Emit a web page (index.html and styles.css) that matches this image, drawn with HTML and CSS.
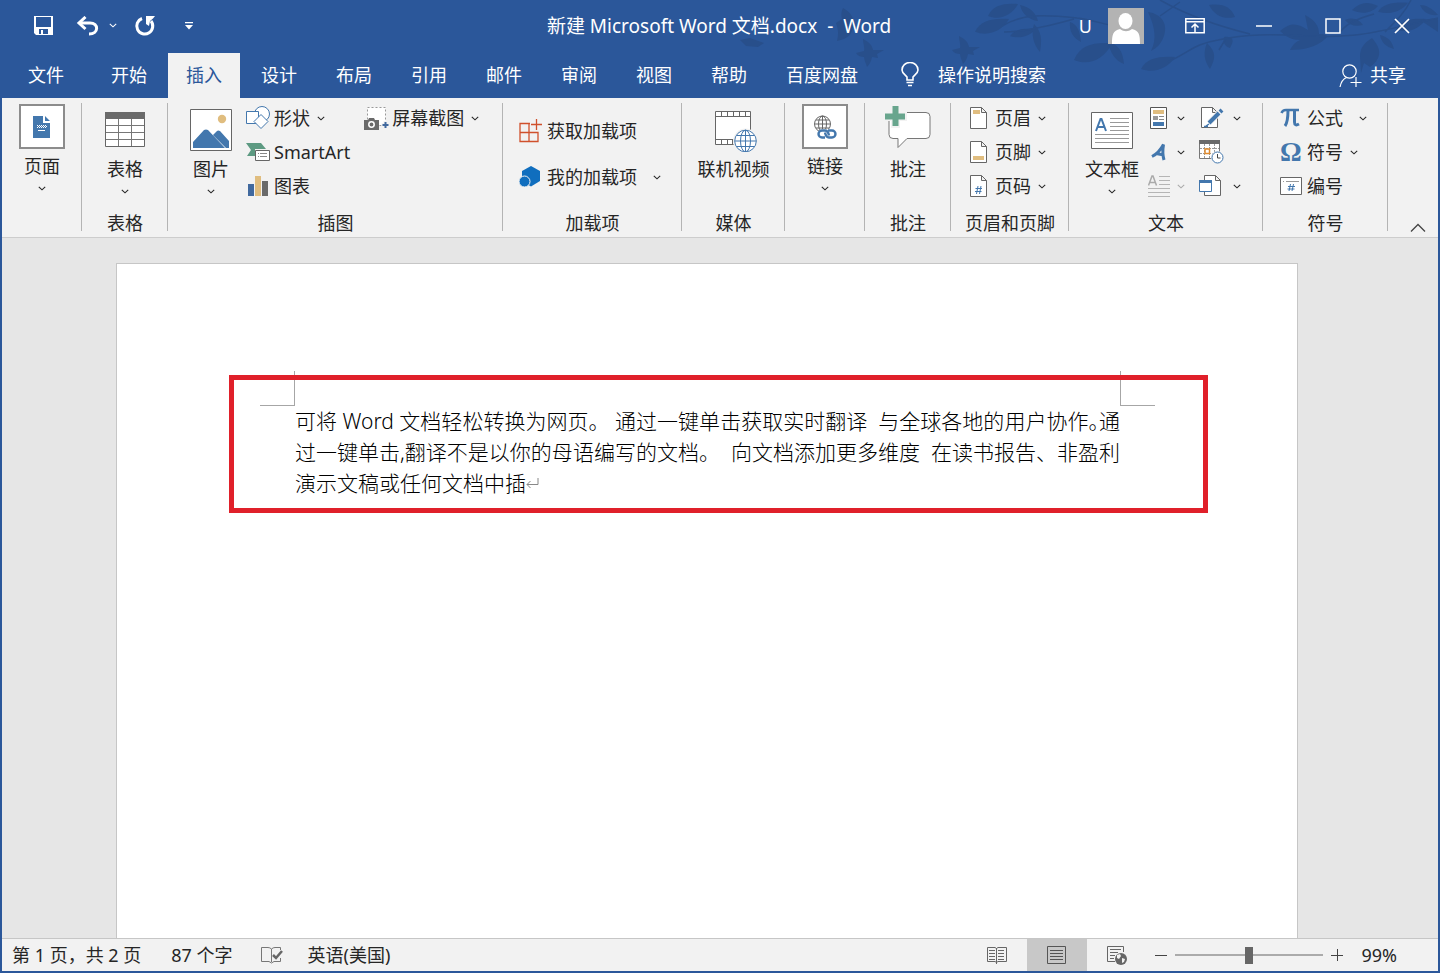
FILE: index.html
```html
<!DOCTYPE html>
<html lang="zh-CN">
<head>
<meta charset="utf-8">
<title>新建 Microsoft Word 文档.docx - Word</title>
<link rel="stylesheet" href="styles.css">
</head>
<body>
<svg class="defs" aria-hidden="true">
  <symbol id="chev" viewBox="0 0 8 5"><path d="M.8.8 4 3.8 7.2.8" fill="none" stroke="currentColor" stroke-width="1.1"/></symbol>
  <symbol id="leaf" viewBox="0 0 30 16" preserveAspectRatio="none"><path d="M0 13C5 2 16 0 30 1 24 12 12 18 0 13Z"/></symbol>
  <symbol id="bird" viewBox="0 0 30 28"><path d="M7 0c6 3 9 6 10 11l11 0-7 4 1 4-6-1c-1 5-3 8-5 10-1-4-3-7-3-10-3 0-6-1-8-4l8-2C9 8 7 5 7 0Z"/></symbol>
</svg>

<header class="top">
  <svg class="decor" width="660" height="98" viewBox="780 0 660 98" aria-hidden="true">
    <g fill="#284f8b">
      <path d="M843 8c9 5 12 12 10 19-1 7-5 12-16 14 2-8 1-12-1-18l6-4c-1-4-1-7 1-11Z"/>
      <use href="#bird" x="856" y="38" width="30" height="30"/>
      <path d="m740 40 10-2 14 5-6 4-12-1z"/>
      <use href="#bird" x="952" y="36" width="30" height="28"/>
      <use href="#leaf" x="975" y="18" width="34" height="17"/>
      <use href="#leaf" x="988" y="3" width="30" height="16"/>
      <use href="#leaf" x="1010" y="28" width="26" height="10"/>
      <path d="M1034 24c8 8 8 16 6 28-7-8-9-18-6-28ZM1020 5c10 2 16 8 18 16-9-1-16-7-18-16ZM1070 22c7 2 10 9 11 20-8-4-12-11-11-20Z"/>
      <use href="#leaf" x="1074" y="42" width="38" height="22"/>
      <path d="M1108 42c10 2 15 9 16 22-9-3-14-12-16-22ZM1148 12c14 2 20 12 16 24-3 8-7 12-13 15 6-12 4-24-3-39Z"/>
      <use href="#leaf" x="1141" y="56" width="34" height="16"/>
      <path d="M1207 43c9 9 9 15 3 26-6-8-7-17-3-26ZM1224 37c9-1 11 3 6 11-6-2-7-6-6-11ZM1209 5c14-2 22 2 26 12-12 3-21-2-26-12Z"/>
      <path d="M1280 31c12-10 18-7 28-1l-3-15c10 5 14 11 14 19 8 0 10 2 6 5-8 8-22 11-35 11 3-6 6-8 10-10-8 0-14-3-20-9Z"/>
      <path d="M1372 38c8 9 12 19-2 29l-6-4-3 10-1-17c0-8 4-13 12-18ZM1380 35c8 2 12 6 14 14-8-2-13-7-14-14ZM1352 10c8-8 16-9 26-4-6 7-16 9-26 4ZM1420 5c6 0 12 3 18 10-9 1-15-3-18-10ZM1345 20c8-3 14-1 18 5-8 2-14 0-18-5Z"/>
      <use href="#leaf" x="1396" y="18" width="30" height="14"/>
      <use href="#leaf" x="1378" y="2" width="30" height="12"/>
      <path d="M1420 20l18-2v14z"/>
    </g>
    <g fill="none" stroke="#284f8b" stroke-width="1.500">
      <path d="M1002 26c20-12 40-12 75-8 22 2 40 14 62 6M1004 32c20 0 45-6 70-13M1168 62c22-10 26-18 50-22 30-6 50-6 90-4 50 2 60-2 130-18M1160 0c25 14 50 24 90 34M1385 32c14-14 20-20 26-32M1340 32c8-10 20-14 34-18M1180 2l-20 14M1225 40l-6 10"/>
    </g>
  </svg>

  <div class="titlebar">
    <div class="qat">
      <button class="ib save" aria-label="保存"><svg width="20" height="20" viewBox="0 0 20 20"><path fill="#fff" fill-rule="evenodd" d="M0 0h19v19H2l-2-2Zm2 1v10h15V1Zm3 12v5h2v-4h2v4h5v-5Z"/></svg></button>
      <button class="ib undo" aria-label="撤销"><svg width="24" height="20" viewBox="0 0 24 20"><path fill="none" stroke="#fff" stroke-width="3" d="M3 7h11c9 0 9 11-1 11"/><path fill="none" stroke="#fff" stroke-width="3" d="M9.500 1 3 7l6.500 6"/></svg></button>
      <button class="ib more" aria-label="撤销选项"><svg width="8" height="5"><use href="#chev"/></svg></button>
      <button class="ib redo" aria-label="重复"><svg width="22" height="22" viewBox="0 0 22 22"><path fill="none" stroke="#fff" stroke-width="3" d="M8 3.500A8 8 0 1 0 17 6"/><path fill="#fff" d="M12 1h9l-2 2.500-3 2.500-1 5-3-2Z"/></svg></button>
      <button class="ib custom" aria-label="自定义快速访问工具栏"><svg width="8" height="8" viewBox="0 0 8 8"><path fill="#fff" d="M0 0h8v1.300H0ZM0 3h8L4 7.500Z"/></svg></button>
    </div>
    <h1 class="title">新建 Microsoft Word 文档.docx&nbsp; -&nbsp; Word</h1>
    <div class="win">
      <span class="user">U</span>
      <button class="avatar" aria-label="帐户"><svg width="36" height="36" viewBox="0 0 36 36"><path fill="#b3b3b3" d="M0 0h36v36H0z"/><ellipse cx="17.500" cy="13" rx="7" ry="8" fill="#fff"/><path fill="#fff" d="M4 36c0-10 1-13 8-15 4 3 8 3 12 0 7 2 8 5 8 15Z"/></svg></button>
      <button class="wb" aria-label="功能区显示选项"><svg width="20" height="16" viewBox="0 0 20 16"><path fill="none" stroke="#fff" stroke-width="1.500" d="M.8.800h18.400v14H.800ZM1 3.800h18M10 14V6M6.500 9.500 10 6l3.500 3.500"/></svg></button>
      <button class="wb" aria-label="最小化"><svg width="16" height="16"><path stroke="#fff" stroke-width="1.500" d="M0 8h16"/></svg></button>
      <button class="wb" aria-label="最大化"><svg width="16" height="16"><path fill="none" stroke="#fff" stroke-width="1.500" d="M1 1h14v14H1Z"/></svg></button>
      <button class="wb" aria-label="关闭"><svg width="16" height="16"><path stroke="#fff" stroke-width="1.700" d="m1 1 14 14M15 1 1 15"/></svg></button>
    </div>
  </div>

  <nav class="tabs">
    <button class="tab file">文件</button>
    <button class="tab">开始</button>
    <button class="tab active">插入</button>
    <button class="tab">设计</button>
    <button class="tab">布局</button>
    <button class="tab">引用</button>
    <button class="tab">邮件</button>
    <button class="tab">审阅</button>
    <button class="tab">视图</button>
    <button class="tab">帮助</button>
    <button class="tab">百度网盘</button>
    <button class="tell"><svg width="18" height="25" viewBox="0 0 18 25"><path fill="none" stroke="#fff" stroke-width="1.600" d="M6 18v-3C4 12.500 1 11 1 8a8 7.500 0 0 1 16 0c0 3-3 4.500-5 7v3ZM5.500 20.500h7M7 23.500h4"/></svg>操作说明搜索</button>
    <button class="share"><svg width="23" height="25" viewBox="0 0 23 25"><circle cx="10.500" cy="9.500" r="6.700" fill="none" stroke="#fff" stroke-width="1.200"/><path fill="none" stroke="#fff" stroke-width="1.200" d="M1 25c1-5 3-8 6.500-9.500M17 15v10M11.500 20.500h11"/></svg>共享</button>
  </nav>
</header>

<section class="ribbon" aria-label="插入">
  <div class="group g-page">
    <div class="items center">
      <button class="big"><span class="frame"><svg width="18" height="24" viewBox="0 0 18 24"><path fill="#4377ad" d="M0 1h10v7h7v15H0ZM12 1l5 5h-5Z"/><path stroke="#fff" stroke-dasharray="1 1" d="M4 10.500h9M5 11.500h9M4 12.500h9"/><path stroke="#fff" d="M5 15.500h7"/></svg></span><span>页面</span><svg class="chev"><use href="#chev"/></svg></button>
    </div>
  </div>

  <div class="group g-table">
    <div class="items center">
      <button class="big"><span class="pic"><svg width="40" height="36" viewBox="0 0 40 36"><path fill="#fff" stroke="#666" d="M.5.500h39v34H.500Z"/><path fill="#6a6a6a" d="M0 0h40v7H0z"/><path fill="none" stroke="#777" d="M1 13.500h38M1 20.500h38M1 27.500h38M13.500 7v27M26.500 7v27"/></svg></span><span>表格</span><svg class="chev"><use href="#chev"/></svg></button>
    </div>
    <div class="name">表格</div>
  </div>

  <div class="group g-illus">
    <div class="items">
      <button class="big"><span class="pic"><svg width="42" height="42" viewBox="0 0 42 42"><path fill="#fff" stroke="#666" d="M.5.500h41v41H.500Z"/><circle cx="32" cy="10" r="4.200" fill="#e0bd7f"/><path fill="#4377ad" d="M3 39v-6l11-12q2-1 4 0l17 18ZM23 26l4-4q1-1 3 0l9 10v7h-3Z"/></svg></span><span>图片</span><svg class="chev"><use href="#chev"/></svg></button>
      <div class="col">
        <button class="row"><span class="ic"><svg width="24" height="24" viewBox="0 0 24 24"><g fill="#fff" stroke="#4377ad"><circle cx="16" cy="8" r="7.500"/><path d="M.5 5.500h12v12H.500Z"/><path d="m15 8.500 7 7-7 7-7-7Z"/></g></svg></span>形状<svg class="chev"><use href="#chev"/></svg></button>
        <button class="row"><span class="ic"><svg width="24" height="20" viewBox="0 0 24 20"><path fill="#5d9a82" d="M0 1h15l5 6H9v7H1l4-6Z"/><path fill="#fff" stroke="#666" d="M9.500 8.500h14v10h-14Z"/><path stroke="#888" d="M12 11.500h1m1 0h7M12 14.500h1m1 0h7"/></svg></span>SmartArt</button>
        <button class="row"><span class="ic"><svg width="22" height="22" viewBox="0 0 22 22"><path fill="#41699e" d="M2 9h6v12H2z"/><path fill="#e0bd7f" d="M9 1h6v20H9z"/><path fill="#6a6a6a" d="M16 6h6v15h-6z"/></svg></span>图表</button>
      </div>
      <div class="col">
        <button class="row"><span class="ic"><svg width="25" height="24" viewBox="0 0 25 24"><path fill="#fff" stroke="#999" stroke-dasharray="2 2" d="M3.500 1.500h18v18h-18z"/><path fill="#6a6a6a" d="M0 14h4l1-2h5l1 2h4v10H0z"/><circle cx="7.500" cy="18.500" r="2.700" fill="none" stroke="#fff" stroke-width="1.500"/><path d="M21.500 15v8M17.500 19h8" stroke="#f2f2f2" stroke-width="4"/><path d="M21.500 16v6M18.500 19h6" stroke="#41699e" stroke-width="2"/></svg></span>屏幕截图<svg class="chev"><use href="#chev"/></svg></button>
      </div>
    </div>
    <div class="name">插图</div>
  </div>

  <div class="group g-addin">
    <div class="items">
      <div class="col tall">
        <button class="row"><span class="ic"><svg width="24" height="24" viewBox="0 0 24 24"><path fill="none" stroke="#d0502c" stroke-width="1.300" d="M11 4.500H1v18h18v-9H1M10 4.500v18M17.500 0v11M12 5.500h11"/></svg></span>获取加载项</button>
        <button class="row wide"><span class="ic"><svg width="22" height="22" viewBox="0 0 22 22"><path fill="#106ebe" d="m12 0 9 5v10l-9 5.500-9-5.500V5Z"/><circle cx="5.500" cy="15.500" r="5.500" fill="#106ebe" stroke="#f2f2f2"/></svg></span>我的加载项<svg class="chev"><use href="#chev"/></svg></button>
      </div>
    </div>
    <div class="name">加载项</div>
  </div>

  <div class="group g-media">
    <div class="items center">
      <button class="big"><span class="pic"><svg width="48" height="44" viewBox="-5 0 48 44"><path fill="#fff" stroke="#666" d="M.5 3.500h35v33H.500Z"/><path fill="none" stroke="#666" d="M1 8.500h34M1 31.500h34M6.500 4v4m6-4v4m6-4v4m6-4v4m6-4v4M6.500 32v4m6-4v4m5-4v4"/><circle cx="30.500" cy="33" r="12.500" fill="#f2f2f2"/><g fill="#fff" stroke="#4377ad"><circle cx="30.500" cy="33" r="10.800"/><ellipse cx="30.500" cy="33" rx="5" ry="10.800"/><path d="M30.500 22v22M20 33h21M22 27.500h17M22 38.500h17"/></g></svg></span><span>联机视频</span></button>
    </div>
    <div class="name">媒体</div>
  </div>

  <div class="group g-link">
    <div class="items center">
      <button class="big"><span class="frame"><svg width="24" height="26" viewBox="0 0 24 26"><g fill="none" stroke="#666"><circle cx="9.500" cy="10" r="8"/><ellipse cx="9.500" cy="10" rx="4" ry="8"/><path d="M9.500 2v16M2 10h15M3 6h13M3 14h13"/></g><path stroke="#fff" stroke-width="10" stroke-linecap="round" d="M10 20h9"/><g fill="none" stroke="#4377ad" stroke-width="2.400"><path d="M12 23.500H9a3.500 3.500 0 0 1 0-7h3q3 0 4 5"/><path d="M15 16.500h4a3.500 3.500 0 0 1 0 7h-3q-3 0-4-5"/></g></svg></span><span>链接</span><svg class="chev"><use href="#chev"/></svg></button>
    </div>
  </div>

  <div class="group g-comment">
    <div class="items center">
      <button class="big"><span class="pic"><svg width="46" height="48" viewBox="0 0 46 48"><path fill="#fff" stroke="#777" d="M8 6.500h33q4 0 4 4v18q0 4-4 4H22l-9 9v-9H8q-4 0-4-4v-18q0-4 4-4Z"/><path stroke="#f2f2f2" stroke-width="9" d="M10.500 0v22M0 10.500h22"/><path stroke="#68a58d" stroke-width="6" d="M10.500 0v20M0 10.500h20"/></svg></span><span>批注</span></button>
    </div>
    <div class="name">批注</div>
  </div>

  <div class="group g-hf">
    <div class="items">
      <div class="col">
        <button class="row"><span class="ic"><svg width="17" height="22" viewBox="0 0 17 22"><path fill="#fff" stroke="#666" d="M.5.500h11l5 5v16H.500ZM11.500.500v5h5"/><path fill="#e0bd7f" d="M3 3h7v4H3z"/></svg></span>页眉<svg class="chev"><use href="#chev"/></svg></button>
        <button class="row"><span class="ic"><svg width="17" height="22" viewBox="0 0 17 22"><path fill="#fff" stroke="#666" d="M.5.500h11l5 5v16H.500ZM11.500.500v5h5"/><path fill="#e0bd7f" d="M3 15h11v4H3z"/></svg></span>页脚<svg class="chev"><use href="#chev"/></svg></button>
        <button class="row"><span class="ic"><svg width="17" height="22" viewBox="0 0 17 22"><path fill="#fff" stroke="#666" d="M.5.500h11l5 5v16H.500ZM11.500.500v5h5"/><path fill="none" stroke="#4377ad" d="M8 11 6.500 19M11 11l-1.500 8M5.500 13.500H12M5 16.500h6.500"/></svg></span>页码<svg class="chev"><use href="#chev"/></svg></button>
      </div>
    </div>
    <div class="name">页眉和页脚</div>
  </div>

  <div class="group g-text">
    <div class="items">
      <button class="big"><span class="pic"><svg width="42" height="37" viewBox="0 0 42 37"><path fill="#fff" stroke="#666" d="M.5.500h41v36H.500Z"/><path fill="none" stroke="#4377ad" stroke-width="2" d="m5 19 4.500-12h1L15 19M6.500 15h7"/><path stroke="#999" d="M19 6.500h19M19 10.500h19M19 14.500h19M19 18.500h19M4 22.500h34M4 26.500h34M4 30.500h34"/></svg></span><span>文本框</span><svg class="chev"><use href="#chev"/></svg></button>
      <div class="col">
        <button class="row" aria-label="文档部件"><span class="ic"><svg width="22" height="22" viewBox="0 0 22 22"><path fill="#fff" stroke="#555" d="M2.500.500h16v21h-16z"/><path fill="#e0bd7f" d="M5 3h11v4H5z"/><path fill="#999" d="M5 9h5v4H5z"/><path stroke="#888" d="M11 9.500h5M11 12.500h5"/><path fill="#4377ad" d="M5 15h11v4H5z"/></svg></span><svg class="chev"><use href="#chev"/></svg></button>
        <button class="row" aria-label="艺术字"><span class="ic"><svg width="22" height="22" viewBox="0 0 22 22"><path fill="none" stroke="#4377ad" stroke-width="3" d="M4 15.500Q11 12 15.500 3.500 14 12 16 19M8 12.500l8 1.500"/></svg></span><svg class="chev"><use href="#chev"/></svg></button>
        <button class="row" aria-label="首字下沉" disabled><span class="ic"><svg width="22" height="22" viewBox="0 0 22 22"><path fill="none" stroke="#aaa" stroke-width="1.500" d="M.5 10.500 4 1h1l3.500 9.500M2 7.500h5"/><path stroke="#b5b5b5" d="M11 1.500h11M11 5.500h11M11 9.500h11M0 13.500h22M0 17.500h22M0 21.500h22"/></svg></span><svg class="chev"><use href="#chev"/></svg></button>
      </div>
      <div class="col">
        <button class="row" aria-label="签名行"><span class="ic"><svg width="25" height="24" viewBox="0 0 25 24"><path fill="#fff" stroke="#666" d="M2.500 1.500h11l5 5v15h-16zM13.500 1.500v5h5"/><path stroke="#f2f2f2" stroke-width="6" d="M10 17 22 5"/><path stroke="#4377ad" stroke-width="4" d="M10 17 20 7M21 6l2-2"/><path stroke="#4377ad" stroke-width="1.500" d="m7 20 3-2M5 20.500h4"/></svg></span><svg class="chev"><use href="#chev"/></svg></button>
        <button class="row" aria-label="日期和时间"><span class="ic"><svg width="25" height="24" viewBox="0 0 25 24"><path fill="#fff" stroke="#777" d="M.5.500h20v18H.500z"/><path fill="#6a6a6a" d="M0 0h21v4H0z"/><path stroke="#999" stroke-dasharray="2 1" d="M1 8.500h19M1 13.500h19M5.500 4v14M10.500 4v14M15.500 4v14"/><path fill="#fff" stroke="#e08a2c" stroke-width="1.500" d="M6 9h4.500v4.500H6z"/><circle cx="18.500" cy="17.500" r="6.500" fill="#f2f2f2"/><circle cx="18.500" cy="17.500" r="5.500" fill="#fff" stroke="#4377ad"/><path fill="none" stroke="#444" d="M18.500 14v4h3"/></svg></span></button>
        <button class="row" aria-label="对象"><span class="ic"><svg width="25" height="24" viewBox="0 0 25 24"><path fill="#fff" stroke="#666" d="M5.500 6V1.500h11l5 5v15h-16V18M16.500 1.500v5h5"/><path fill="#fff" stroke="#4377ad" d="M.5 6.500h12v11H.500z"/><path fill="#4377ad" d="M0 6h13v3H0z"/></svg></span><svg class="chev"><use href="#chev"/></svg></button>
      </div>
    </div>
    <div class="name">文本</div>
  </div>

  <div class="group g-sym">
    <div class="items">
      <div class="col">
        <button class="row wide"><span class="ic"><svg width="22" height="20" viewBox="0 0 22 20"><path fill="none" stroke="#4377ad" stroke-width="2.500" d="M1.500 5Q2.500 2 6 2h13"/><path fill="none" stroke="#4377ad" stroke-width="3" d="M8 2q0 12-3 16M14.500 2v12q0 4.500 4.500 2"/></svg></span>公式<svg class="chev"><use href="#chev"/></svg></button>
        <button class="row"><span class="ic glyph">Ω</span>符号<svg class="chev"><use href="#chev"/></svg></button>
        <button class="row"><span class="ic"><svg width="22" height="18" viewBox="0 0 22 18"><path fill="#fff" stroke="#666" d="M.5.500h21v17H.500Z"/><path stroke="#999" d="M3 4.500h1m2 0h13"/><path fill="none" stroke="#4377ad" d="M10.500 7 9 14M13.500 7 12 14M8 9.500h7M7.500 12h7"/></svg></span>编号</button>
      </div>
    </div>
    <div class="name">符号</div>
  </div>
  <button class="collapse" aria-label="折叠功能区"><svg width="16" height="9"><path fill="none" stroke="#444" stroke-width="1.300" d="m1 8.500 7-7 7 7"/></svg></button>
</section>

<main class="canvas">
  <article class="page">
    <div class="body">
      <i class="mark left"></i><i class="mark right"></i>
      <p class="line">可将 Word 文档轻松转换为网页。 通过一键单击获取实时翻译&nbsp; 与全球各地的用户协作<span class="half">。</span>通</p>
      <p class="line">过一键单击,翻译不是以你的母语编写的文档。&nbsp; 向文档添加更多维度&nbsp; 在读书报告、非盈利</p>
      <p class="line last">演示文稿或任何文档中插<svg width="13" height="12" viewBox="0 0 13 12"><path fill="none" stroke="#888" d="M12 0v6.500H1M4.500 3 1 6.500 4.500 10"/></svg></p>
      <div class="callout"></div>
    </div>
  </article>
</main>

<footer class="status">
  <span class="s-page">第 1 页，共 2 页</span>
  <span class="s-words">87 个字</span>
  <button class="s-proof" aria-label="校对"><svg width="22" height="18" viewBox="0 0 22 18"><path fill="none" stroke="#777" d="M10.500 3v13M10.500 3Q9 1.500 7 1.500H.500v14H8l2.500 1.500 2.500-1.500h6.500V12M10.500 3Q12 1.500 14 1.500h5.500V4"/><path fill="none" stroke="#666" stroke-width="2.500" d="m12 9 3 3 6-7"/></svg></button>
  <span>英语(美国)</span>
  <div class="views">
    <button aria-label="阅读视图"><svg width="20" height="18" viewBox="0 0 20 18"><path fill="none" stroke="#666" d="M9.500 2v16M.500 1.500H8l1.500 1L11 1.500h8.500v14H11l-1.500 1-1.500-1H.500ZM2 4.500h6M2 7.500h6M2 10.500h6M2 13.500h6M11 4.500h6M11 7.500h6M11 10.500h6M11 13.500h6"/></svg></button>
    <button class="on" aria-label="页面视图"><svg width="20" height="18" viewBox="0 0 20 18"><path fill="none" stroke="#555" d="M.500.500h18v17H.500ZM3 4.500h13M3 7.500h13M3 10.500h13M3 13.500h13"/></svg></button>
    <button aria-label="Web 版式视图"><svg width="20" height="20" viewBox="0 0 20 20"><path fill="none" stroke="#666" d="M8 16.500H.500V1.500h16V7M3 4.500h11M3 7.500h8M3 10.500h5M3 13.500h4"/><circle cx="14" cy="14" r="6" fill="#666"/><path fill="#f2f2f2" d="m10 10 3-1 1 2-2 3-2-1ZM15 13l3 1-1 3-2 1Z"/></svg></button>
  </div>
  <div class="zoom">
    <button aria-label="缩小"><svg width="12" height="12"><path stroke="#444" d="M0 6.500h12"/></svg></button>
    <input type="range" min="0" max="100" value="50" aria-label="显示比例">
    <button aria-label="放大"><svg width="12" height="12"><path stroke="#444" d="M0 6.500h12M6.500 0v12"/></svg></button>
    <span class="pct">99%</span>
  </div>
</footer>
</body>
</html>
```
FILE: styles.css
```css
* { box-sizing: border-box; }

body {
  margin: 0;
  height: 100vh;
  display: flex;
  flex-direction: column;
  overflow: hidden;
  background: #e6e6e6;
  border: solid #2b579a;
  border-width: 0 2px 2px;
  color: #262626;
  font: 18px/24px "Noto Sans", "Noto Sans CJK SC", sans-serif;
}

button {
  margin: 0;
  padding: 0;
  border: 0;
  background: none;
  color: inherit;
  font: inherit;
  white-space: nowrap;
}

svg { display: block; flex: none; }
.defs { position: absolute; width: 0; height: 0; }
.chev { width: 8px; height: 5px; }

/* Title bar and tabs */
.top { position: relative; background: #2b579a; color: #fff; }
.decor { position: absolute; top: 0; right: -2px; overflow: visible; }

.titlebar {
  position: relative;
  display: grid;
  grid-template-columns: 1fr auto 1fr;
  align-items: center;
  height: 53px;
  padding: 0 2px 2px 0;
}
.qat { display: flex; align-items: center; padding-left: 32px; }
.undo { margin-left: 22px; }
.more { margin-left: 9px; }
.redo { margin-left: 17px; }
.custom { margin-left: 29px; }
.title { margin: 0; font-size: 19px; font-weight: 400; white-space: nowrap; }
.win { display: flex; align-items: center; justify-content: flex-end; height: 50px; }
.user { margin-right: 16px; }
.avatar { margin-right: 16px; }
.wb { width: 69px; height: 50px; display: flex; align-items: center; justify-content: center; }

.tabs { position: relative; display: flex; gap: 3px; height: 45px; padding-left: 8px; }
.tab { padding: 0 18px 2px; }
.file { margin-right: 8px; }
.active { background: #f2f2f2; color: #2b579a; }
.tell { display: flex; align-items: center; gap: 19px; margin-left: 22px; padding-bottom: 2px; }
.share { display: flex; align-items: center; gap: 8px; margin: 0 32px 0 auto; padding-bottom: 2px; }

/* Ribbon */
.ribbon {
  position: relative;
  display: flex;
  height: 140px;
  background: #f2f2f2;
  border-bottom: 1px solid #cdcdcd;
}
.group {
  position: relative;
  display: flex;
  flex-direction: column;
  justify-content: space-between;
  padding: 3px 0 2px;
}
.group::after {
  content: "";
  position: absolute;
  top: 5px;
  right: 0;
  bottom: 6px;
  width: 1px;
  background: #b4b4b4;
}
.items { display: flex; align-items: flex-start; }
.center { justify-content: center; }
.name { text-align: center; }

.g-page { width: 80px; }
.g-table { width: 86px; }
.g-illus { width: 335px; }
.g-addin { width: 179px; }
.g-media { width: 103px; }
.g-link { width: 80px; }
.g-comment { width: 86px; }
.g-hf { width: 118px; }
.g-text { width: 194px; }
.g-sym { width: 125px; }

.big { display: flex; flex-direction: column; align-items: center; gap: 5px; padding-top: 3px; }
.big .chev { margin-top: 3px; }
.frame {
  display: flex;
  align-items: center;
  justify-content: center;
  width: 46px;
  height: 45px;
  background: #fff;
  border: 2px solid #8c8c8c;
}
.pic { display: flex; align-items: center; justify-content: center; height: 48px; padding-top: 4px; }

.col { display: flex; flex-direction: column; align-items: flex-start; }
.row { display: flex; align-items: center; height: 34px; }
.row .chev { margin-left: 7px; }
.ic { display: flex; align-items: center; width: 28px; }
.wide .chev { margin-left: 16px; }
.tall { padding-top: 7px; }
.tall .row { height: 46px; }

.g-illus .items { padding-left: 22px; }
.g-illus .col { margin-left: 14px; }
.g-addin .items { padding-left: 16px; }
.g-hf .items { padding-left: 19px; }
.g-hf .ic { width: 25px; }
.g-text .items { padding-left: 16px; }
.g-text .col { margin-left: 9px; }
.g-text .col + .col { margin-left: 14px; }
.g-text .ic { width: 22px; }
.g-text .col + .col .ic { width: 27px; }
.g-sym .items { padding-left: 17px; }
.g-sym .ic { width: 27px; }
.row:disabled { color: #aaa; }
.glyph { color: #4377ad; font: bold 27px/30px "Liberation Serif", serif; }
.collapse { align-self: flex-end; margin: 0 12px 5px auto; }

/* Document */
.canvas { flex: 1; min-height: 0; display: flex; padding: 25px 140px 0 114px; }
.page {
  flex: 1;
  padding: 142px 177px 0 178px;
  background: #fff;
  border: 1px solid #c6c6c6;
  border-bottom: 0;
}
.body { position: relative; color: #000; font-size: 21px; line-height: 31px; font-weight: 300; }
.line { margin: 0; text-align: justify; text-align-last: justify; }
.last { display: flex; align-items: center; }
.half { font-feature-settings: "halt"; }
.mark { position: absolute; top: -35px; width: 35px; height: 35px; border: 0 solid #a6a6a6; }
.left { right: 100%; border-width: 0 1px 1px 0; }
.right { left: 100%; border-width: 0 0 1px 1px; }
.callout { position: absolute; inset: -31px -88px -14px -66px; border: 5px solid #e0202a; }

/* Status bar */
.status {
  display: flex;
  align-items: center;
  height: 33px;
  padding-left: 10px;
  background: #f2f2f2;
  border-top: 1px solid #c6c6c6;
  white-space: nowrap;
}
.s-page { margin-right: 30px; }
.s-words { margin-right: 28px; }
.s-proof { margin-right: 25px; }
.views { display: flex; align-self: stretch; margin-left: auto; }
.views button { width: 60px; display: flex; align-items: center; justify-content: center; }
.views .on { background: #c8c8c8; }
.zoom { display: flex; align-items: center; padding: 0 41px 0 8px; }
.zoom input {
  appearance: none;
  width: 148px;
  height: 18px;
  margin: 0 8px;
  background: linear-gradient(#ababab, #ababab) center / 100% 2px no-repeat;
}
.zoom input::-webkit-slider-thumb { appearance: none; width: 8px; height: 17px; background: #666; }
.pct { margin-left: 18px; }
```
